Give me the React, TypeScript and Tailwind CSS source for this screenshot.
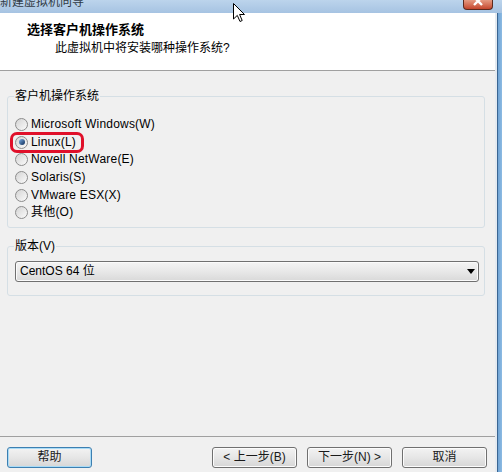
import React from "react"

const font = { fontFamily: '"Liberation Sans", "Noto Sans CJK SC", sans-serif' }

const options = [
  "Microsoft Windows(W)",
  "Linux(L)",
  "Novell NetWare(E)",
  "Solaris(S)",
  "VMware ESX(X)",
  "其他(O)",
]

function Radio({ checked }: { checked?: boolean }) {
  return (
    <span className="w-[13px] h-[13px] shrink-0 rounded-full border border-[#8c8c8c] bg-gradient-to-br from-[#d4d4d4] to-[#fbfbfb] flex items-center justify-center">
      {checked && (
        <span className="w-[6px] h-[6px] rounded-full bg-gradient-to-br from-[#7fb2e8] to-[#0d2c57]" />
      )}
    </span>
  )
}

function Button({ label, primary }: { label: string; primary?: boolean }) {
  return (
    <button
      className={
        "w-[85px] h-[21px] rounded-[3px] border text-[12px] leading-[19px] text-[#1a1a1a] bg-gradient-to-b from-[#f3f3f3] via-[#e6e6e6] to-[#d6d6d6] " +
        (primary
          ? "border-[#3c7fb1] shadow-[inset_0_0_0_1px_#a9dbf6]"
          : "border-[#707070] shadow-[inset_0_0_0_1px_#fcfcfc]")
      }
    >
      {label}
    </button>
  )
}

export default function App() {
  return (
    <div className="relative w-[502px] h-[472px] overflow-hidden flex flex-col bg-[#f0f0f0]" style={font}>
      {/* title bar */}
      <div className="relative h-[13px] shrink-0 flex items-start overflow-hidden bg-gradient-to-b from-[#bcd4ec] to-[#a6c3e2]">
        <span className="-mt-[6px] text-[12px] leading-[16px] text-[#303a45]">新建虚拟机向导</span>
        <div className="ml-auto mr-[9px] w-[30px] h-[10px] rounded-b-[4px] border border-t-0 border-[#5c2a1e] bg-gradient-to-b from-[#e59a82] to-[#c4452c] flex justify-center overflow-hidden">
          <svg width="12" height="10" viewBox="0 0 12 10" className="-mt-[3px]">
            <path d="M2 0 L10 8 M10 0 L2 8" stroke="#ffffff" strokeWidth="2.4" />
          </svg>
        </div>
      </div>

      <div className="flex-1 flex">
        <div className="w-[495px] flex flex-col">
          {/* header */}
          <div className="h-[58px] shrink-0 bg-white border-b border-[#a0a0a0]">
            <div className="pl-[27px] pt-[9px] text-[13px] leading-[16px] font-bold text-black">选择客户机操作系统</div>
            <div className="pl-[55px] mt-[3px] text-[12px] leading-[15px] text-black">此虚拟机中将安装哪种操作系统?</div>
          </div>

          {/* body */}
          <div className="flex-1 flex flex-col text-[12px] text-black">
            <fieldset className="mt-[18px] ml-[7px] w-[478px] border border-[#d5dfe5] rounded-[3px]">
              <legend className="ml-[6px] px-[1px] leading-[15px]">客户机操作系统</legend>
              <div className="pt-[12px] pl-[7px] pb-[5px]">
                {options.map((o, i) => (
                  <div key={o} className="relative h-[17.6px] flex items-center gap-[3px] leading-[15px] tracking-[0.2px]">
                    <Radio checked={i === 1} />
                    <span>{o}</span>
                    {i === 1 && (
                      <div className="absolute left-[-5px] top-[-2px] w-[74px] h-[21px] rounded-[7px] border-[3px] border-[#e0102a]" />
                    )}
                  </div>
                ))}
              </div>
            </fieldset>

            <fieldset className="mt-[11px] ml-[7px] w-[478px] border border-[#d5dfe5] rounded-[3px]">
              <legend className="ml-[6px] px-[1px] leading-[15px]">版本(V)</legend>
              <div className="pt-[7px] pl-[7px] pr-[5px] pb-[13px]">
                <div className="h-[21px] rounded-[3px] border border-[#707070] bg-gradient-to-b from-[#f4f4f4] via-[#e8e8e8] to-[#d9d9d9] shadow-[inset_0_0_0_1px_#fbfbfb] flex items-center pl-[4px] pr-[3px] leading-[15px]">
                  <span>CentOS 64 位</span>
                  <svg width="8" height="5" viewBox="0 0 8 5" className="ml-auto">
                    <path d="M0 0 L8 0 L4 5 Z" fill="#000" />
                  </svg>
                </div>
              </div>
            </fieldset>
          </div>

          {/* footer */}
          <div className="h-[36px] shrink-0 border-t border-[#a0a0a0] pt-[10px] pl-[7px] pr-[8px] flex items-start">
            <Button label="帮助" primary />
            <div className="ml-auto flex gap-[10px]">
              <Button label="< 上一步(B)" />
              <Button label="下一步(N) >" />
              <Button label="取消" />
            </div>
          </div>
        </div>

        {/* window frame edge */}
        <div className="flex-1 flex">
          <div className="w-[2px] bg-[#e4eaf0]" />
          <div className="w-[1px] bg-[#3a6592]" />
          <div className="flex-1 bg-gradient-to-r from-[#6fa3d4] to-[#8dbbe3]" />
        </div>
      </div>

      {/* mouse cursor */}
      <svg width="13" height="20" viewBox="0 0 13 20" className="absolute left-[233px] top-[3px]">
        <path d="M0.5 0.5 L0.5 16 L4.3 12.4 L7 18.5 L9.2 17.5 L6.6 11.5 L11.5 11.5 Z" fill="#ffffff" stroke="#000000" strokeWidth="1" />
      </svg>
    </div>
  )
}
